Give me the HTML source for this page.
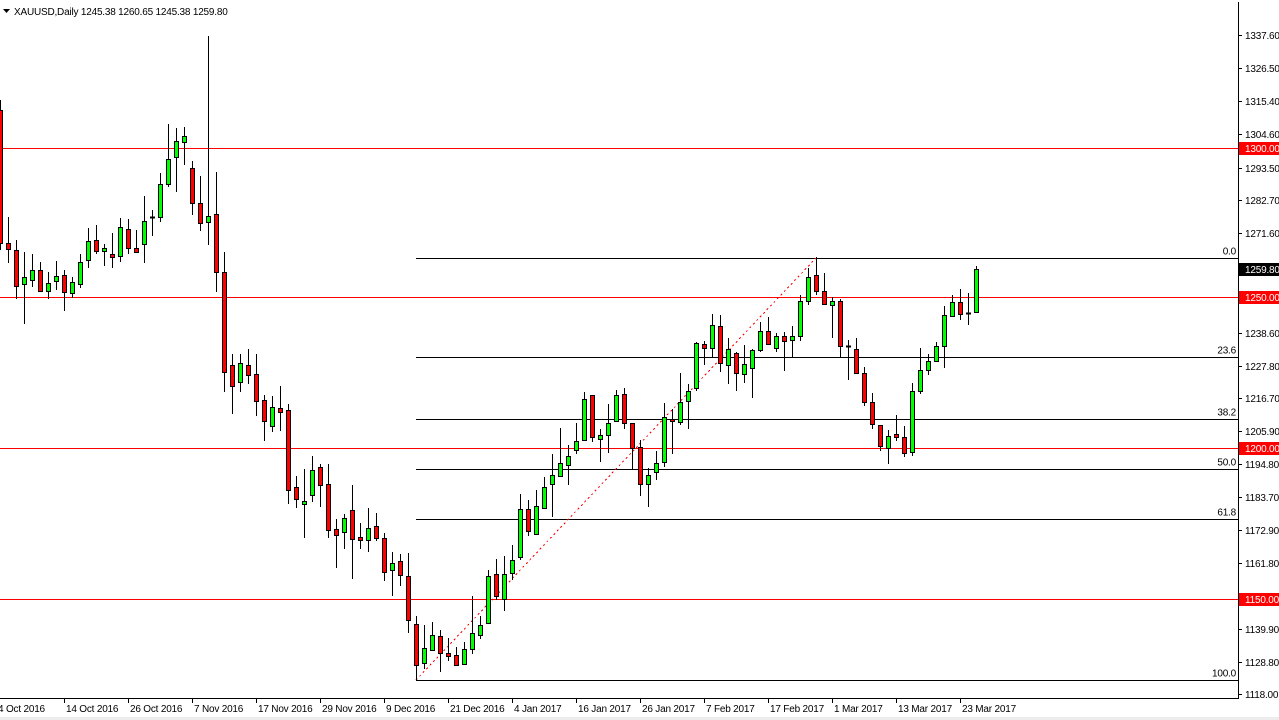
<!DOCTYPE html>
<html><head><meta charset="utf-8"><style>
html,body{margin:0;padding:0;background:#fff;width:1279px;height:720px;overflow:hidden}
svg{display:block}
text{font-family:"Liberation Sans",sans-serif;font-size:10px;letter-spacing:-0.2px}
line,rect{shape-rendering:crispEdges}
</style></head><body>
<svg id="s" width="1279" height="720" xmlns="http://www.w3.org/2000/svg">
<rect x="0" y="0" width="1279" height="720" fill="#fff"/>
<rect x="0" y="717" width="1279" height="3" fill="#ececec"/>
<g id="lines"></g>
<g id="c"></g>
<g id="ax"></g>
</svg>
<script>
var NS="http://www.w3.org/2000/svg";
function el(p,t,a,txt){var e=document.createElementNS(NS,t);for(var k in a)e.setAttribute(k,a[k]);if(txt!=null)e.textContent=txt;p.appendChild(e);return e;}
var L=document.getElementById('lines'),C=document.getElementById('c'),A=document.getElementById('ax');
// fib lines
[[258.5,'0.0'],[357.5,'23.6'],[419.5,'38.2'],[469.5,'50.0'],[519.5,'61.8'],[680.5,'100.0']].forEach(function(f){
 el(L,'line',{x1:416,x2:1238,y1:f[0],y2:f[0],stroke:'#000','stroke-width':1});
 el(L,'text',{x:1236,y:f[0]-4,'text-anchor':'end',fill:'#000'},f[1]);
});
// red horizontal lines
[148.5,297.5,448.5,599.5].forEach(function(y){el(L,'line',{x1:0,x2:1238,y1:y,y2:y,stroke:'#ff0000','stroke-width':1});});
el(L,'line',{x1:416,y1:680,x2:816,y2:258,stroke:'#ff0000','stroke-width':1,'stroke-dasharray':'2,3'});
var d=[[110,243,100,250],[243,249,217,263],[250,286,240,299],[284,277,252,324],[280,270,254,287],[270,291,262,291],[291,283,272,299],[281,276,261,290],[275,292,270,311],[293,282,277,298],[284,262,254,288],[260,241,228,268],[240,251,225,254],[251,248,244,266],[254,257,233,268],[256,227,218,262],[229,248,219,254],[248,252,230,253],[244,221,196,263],[217,217,210,236],[217,184,173,222],[184,159,124,187],[157,141,128,192],[142,136,127,165],[168,203,161,215],[203,223,176,231],[222,216,36,245],[214,272,172,292],[272,372,252,392],[365,386,354,414],[382,363,354,392],[365,375,349,384],[374,401,354,416],[400,421,395,441],[426,407,396,432],[408,412,386,431],[410,490,404,504],[487,499,476,508],[504,501,469,538],[495,470,456,502],[467,485,464,507],[484,530,464,538],[529,535,519,568],[532,518,514,549],[510,539,485,579],[537,540,523,549],[540,528,508,552],[526,538,513,541],[538,572,533,581],[570,563,552,596],[561,575,554,586],[576,620,553,633],[624,665,616,680],[663,648,625,669],[650,635,622,651],[636,653,630,672],[653,656,638,661],[655,665,647,666],[664,649,642,665],[649,633,596,654],[635,625,616,639],[623,576,570,624],[574,596,559,600],[599,574,556,611],[573,560,545,580],[557,509,494,560],[509,531,500,536],[534,506,490,535],[508,487,477,508],[484,475,454,517],[476,463,428,477],[465,456,445,485],[450,441,423,454],[440,399,392,441],[395,437,395,442],[439,435,429,462],[435,423,404,453],[421,395,390,421],[394,423,388,429],[423,448,423,469],[447,484,440,496],[484,475,468,507],[472,463,451,480],[462,417,403,467],[419,421,409,454],[422,402,373,425],[401,391,384,429],[388,343,342,391],[344,348,341,365],[348,325,314,358],[326,363,315,372],[365,349,338,384],[353,373,352,391],[374,364,345,383],[368,350,349,398],[350,331,322,352],[331,344,317,345],[348,336,333,352],[336,341,332,371],[340,336,326,358],[336,301,295,341],[301,277,268,305],[275,291,257,295],[291,304,273,305],[305,301,297,338],[301,346,299,357],[346,346,340,380],[349,373,338,374],[373,402,367,406],[402,424,393,429],[425,446,425,451],[448,436,430,464],[434,437,415,441],[437,453,426,457],[452,391,383,456],[391,370,348,394],[370,361,354,375],[361,346,342,362],[346,315,306,368],[316,302,295,316],[302,314,289,320],[313,313,293,325],[312,269,266,312]];
d.forEach(function(c,i){
 var x=i*8+0.5;
 el(C,'line',{x1:x,x2:x,y1:c[2],y2:c[3],stroke:'#000','stroke-width':1});
 var top=Math.min(c[0],c[1]),bot=Math.max(c[0],c[1]);
 if(bot-top<1){el(C,'line',{x1:x-2.5,x2:x+2.5,y1:top+0.5,y2:top+0.5,stroke:'#000','stroke-width':2});return;}
 var col=c[1]<c[0]?'#00ff00':'#ff0000';
 el(C,'rect',{x:x-2,y:top+0.5,width:4,height:bot-top,fill:col,stroke:'#000','stroke-width':1});
});
el(A,'line',{x1:1238.5,x2:1238.5,y1:2,y2:698,stroke:'#000'});
el(A,'line',{x1:0,x2:1239,y1:698.5,y2:698.5,stroke:'#000'});
var pr=[[35,'1337.60'],[68,'1326.50'],[101,'1315.40'],[134,'1304.60'],[168,'1293.50'],[200,'1282.70'],[233,'1271.60'],[333,'1238.60'],[366,'1227.80'],[398,'1216.70'],[431,'1205.90'],[464,'1194.80'],[497,'1183.70'],[530,'1172.90'],[563,'1161.80'],[629,'1139.90'],[662,'1128.80'],[694,'1118.00']];
pr.forEach(function(p){el(A,'line',{x1:1238,x2:1242,y1:p[0]+0.5,y2:p[0]+0.5,stroke:'#000'});el(A,'text',{x:1245,y:p[0]+4,fill:'#000'},p[1]);});
[[148,'1300.00','#ff0000','#fff'],[297,'1250.00','#ff0000','#fff'],[448,'1200.00','#ff0000','#fff'],[599,'1150.00','#ff0000','#fff'],[269,'1259.80','#000','#fff']].forEach(function(p){
 el(A,'rect',{x:1239,y:p[0]-6,width:40,height:13,fill:p[2]});
 el(A,'text',{x:1245,y:p[0]+4,fill:p[3]},p[1]);
});
var dl=['4 Oct 2016','14 Oct 2016','26 Oct 2016','7 Nov 2016','17 Nov 2016','29 Nov 2016','9 Dec 2016','21 Dec 2016','4 Jan 2017','16 Jan 2017','26 Jan 2017','7 Feb 2017','17 Feb 2017','1 Mar 2017','13 Mar 2017','23 Mar 2017'];
dl.forEach(function(t,i){var x=i*64;
 if(i>0)el(A,'line',{x1:x+0.5,x2:x+0.5,y1:698,y2:703,stroke:'#000'});
 el(A,'text',{x:i==0?-2:x+2,y:712,fill:'#000'},t);});
el(A,'path',{d:'M3,9 L10,9 L6.5,13 Z',fill:'#000'});
el(A,'text',{x:14,y:15,fill:'#000'},'XAUUSD,Daily  1245.38 1260.65 1245.38 1259.80');
</script>
</body></html>
